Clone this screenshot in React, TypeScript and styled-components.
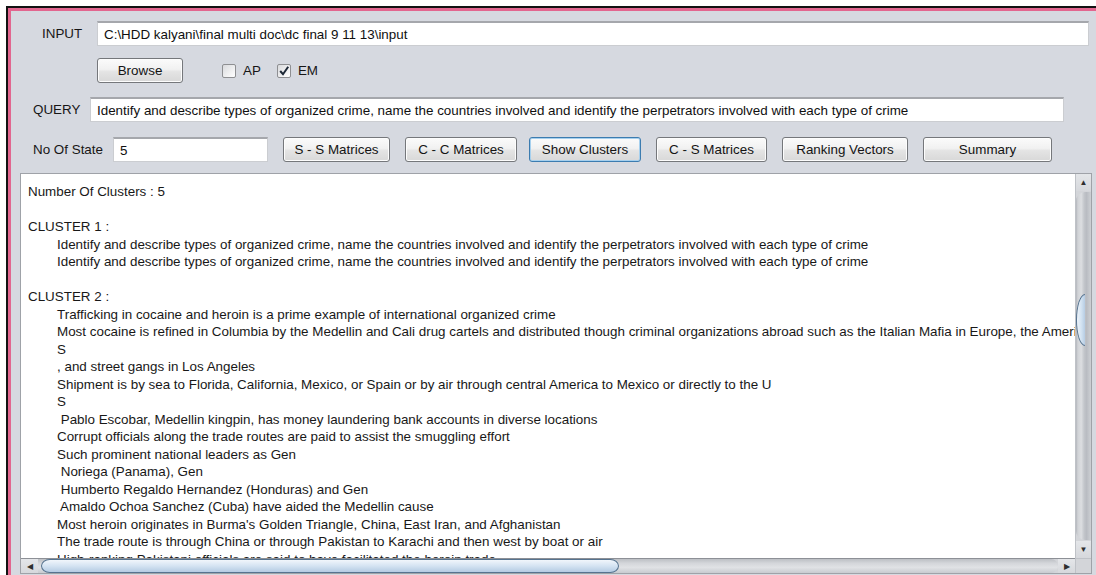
import React from "react";
import styled, { createGlobalStyle } from "styled-components";

const GlobalStyle = createGlobalStyle`
  html, body {
    margin: 0;
    padding: 0;
    background: #ffffff;
    overflow: hidden;
  }
  body {
    font-family: "Liberation Sans", Arial, sans-serif;
    font-size: 13.4px;
    color: #161616;
  }
`;

const Window = styled.div`
  margin: 6px 0 0 6px;
  border-top: 2px solid #121212;
  border-left: 2px solid #121212;
  height: 569px;
  box-sizing: border-box;
`;

const Panel = styled.div`
  border-top: 3px solid #e2668f;
  border-left: 3px solid #e2668f;
  background: #d6d9e0;
  height: 100%;
  box-sizing: border-box;
  padding: 10px 4px 0 0;
  display: flex;
  flex-direction: column;
`;

const Row = styled.div<{ $left: number; $right?: number; $top?: number }>`
  display: flex;
  align-items: center;
  height: 25px;
  padding-left: ${(p) => p.$left}px;
  padding-right: ${(p) => p.$right ?? 0}px;
  margin-top: ${(p) => p.$top ?? 0}px;
`;

const Label = styled.span<{ $width: number }>`
  width: ${(p) => p.$width}px;
  flex: none;
  white-space: nowrap;
`;

const Field = styled.div<{ $width?: number }>`
  height: 100%;
  box-sizing: border-box;
  ${(p) => (p.$width ? `width: ${p.$width}px; flex: none;` : "flex: 1;")}
  background: #ffffff;
  border: 1px solid #cbcdd1;
  border-top: 2px solid #a5a7ac;
  padding: 0 0 0 6px;
  display: flex;
  align-items: center;
  white-space: nowrap;
  overflow: hidden;
  color: #101010;
`;

const Button = styled.button<{ $width: number; $gap?: number; $focused?: boolean }>`
  width: ${(p) => p.$width}px;
  height: 25px;
  margin-left: ${(p) => p.$gap ?? 0}px;
  box-sizing: border-box;
  border: 1px solid ${(p) => (p.$focused ? "#3c7cb0" : "#75777b")};
  box-shadow: ${(p) =>
    p.$focused ? "inset 0 0 0 1px #a6d0ee" : "inset 0 0 0 1px #fdfdfd"};
  border-radius: 3px;
  background: linear-gradient(#fbfbfb 0%, #f1f1f1 45%, #e4e4e4 55%, #d8d8d8 100%);
  font-family: "Liberation Sans", Arial, sans-serif;
  font-size: 13.4px;
  color: #141414;
  padding: 0;
  flex: none;
`;

const Check = styled.span<{ $gap: number }>`
  display: inline-flex;
  align-items: center;
  margin-left: ${(p) => p.$gap}px;
  gap: 7px;
`;

const Box = styled.span`
  width: 14px;
  height: 14px;
  box-sizing: border-box;
  border: 1px solid #8e8f92;
  border-radius: 2px;
  background: linear-gradient(135deg, #d9dadd, #f4f4f5 70%, #ffffff);
  display: inline-flex;
  align-items: center;
  justify-content: center;
`;

const ScrollPane = styled.div`
  margin: 11px 0 0 9px;
  height: 401px;
  flex: none;
  box-sizing: border-box;
  border: 1px solid #9fa2a8;
  background: #ffffff;
  display: grid;
  grid-template-columns: 1fr 16px;
  grid-template-rows: 384px 15px;
`;

const Text = styled.div`
  padding: 9px 0 0 7px;
  overflow: hidden;
  line-height: 17.5px;
  color: #181818;
`;

const Line = styled.div<{ $indent?: boolean }>`
  height: 17.5px;
  white-space: pre;
  padding-left: ${(p) => (p.$indent ? 29 : 0)}px;
`;

const VBar = styled.div`
  display: flex;
  flex-direction: column;
  background: #d3d5d9;
  border-left: 1px solid #bfc2c7;
`;

const ArrowCell = styled.div<{ $h?: number; $w?: number }>`
  flex: none;
  height: ${(p) => (p.$h ? `${p.$h}px` : "auto")};
  width: ${(p) => (p.$w ? `${p.$w}px` : "auto")};
  display: flex;
  align-items: center;
  justify-content: center;
  background: linear-gradient(#e4e6e9, #d6d8dc);
  font-size: 8px;
  color: #2f2f2f;
`;

const VTrack = styled.div`
  flex: 1;
  display: flex;
  flex-direction: column;
  border-radius: 9px 0 0 9px;
  background: linear-gradient(
    to right,
    #b3b6bc 0%,
    #d0d2d6 12%,
    #dcdee1 35%,
    #c2c5ca 55%,
    #b9bcc2 70%,
    #cdd0d4 100%
  );
  margin: 1px 0 1px 0;
`;

const VThumb = styled.div<{ $top: number }>`
  margin-top: ${(p) => p.$top}px;
  height: 52px;
  width: 9px;
  box-sizing: border-box;
  border: 1px solid #56738f;
  border-right: none;
  border-radius: 9px 0 0 9px / 26px 0 0 26px;
  background: linear-gradient(to right, #eef4fa, #cfe0f0 60%, #b6cce3);
`;

const HBar = styled.div`
  display: flex;
  align-items: stretch;
  background: #d3d5d9;
  border-top: 1px solid #8d9096;
`;

const HTrack = styled.div`
  flex: 1;
  display: flex;
  padding-left: 3px;
  background: linear-gradient(#bcbfc4 0%, #d4d6da 30%, #e0e2e5 60%, #c8cbd0 100%);
  border-radius: 0 8px 8px 0;
`;

const HThumb = styled.div<{ $width: number }>`
  width: ${(p) => p.$width}px;
  box-sizing: border-box;
  border: 1px solid #56738f;
  border-radius: 10px / 8px;
  background: linear-gradient(#f1f6fb, #d4e3f2 50%, #b4cbe3);
`;

const Corner = styled.div`
  background: #d3d5d9;
  border-left: 1px solid #bfc2c7;
  border-top: 1px solid #bfc2c7;
`;

const query =
  "Identify and describe types of organized crime, name the countries involved and identify the perpetrators involved with each type of crime";

type TextLine = { text: string; indent?: boolean };

const lines: TextLine[] = [
  { text: "Number Of Clusters : 5" },
  { text: "" },
  { text: "CLUSTER 1 :" },
  { text: query, indent: true },
  { text: query, indent: true },
  { text: "" },
  { text: "CLUSTER 2 :" },
  { text: "Trafficking in cocaine and heroin is a prime example of international organized crime", indent: true },
  {
    text: "Most cocaine is refined in Columbia by the Medellin and Cali drug cartels and distributed though criminal organizations abroad such as the Italian Mafia in Europe, the American Mafia in the U",
    indent: true,
  },
  { text: "S", indent: true },
  { text: ", and street gangs in Los Angeles", indent: true },
  {
    text: "Shipment is by sea to Florida, California, Mexico, or Spain or by air through central America to Mexico or directly to the U",
    indent: true,
  },
  { text: "S", indent: true },
  { text: " Pablo Escobar, Medellin kingpin, has money laundering bank accounts in diverse locations", indent: true },
  { text: "Corrupt officials along the trade routes are paid to assist the smuggling effort", indent: true },
  { text: "Such prominent national leaders as Gen", indent: true },
  { text: " Noriega (Panama), Gen", indent: true },
  { text: " Humberto Regaldo Hernandez (Honduras) and Gen", indent: true },
  { text: " Amaldo Ochoa Sanchez (Cuba) have aided the Medellin cause", indent: true },
  { text: "Most heroin originates in Burma's Golden Triangle, China, East Iran, and Afghanistan", indent: true },
  { text: "The trade route is through China or through Pakistan to Karachi and then west by boat or air", indent: true },
  { text: "High-ranking Pakistani officials are said to have facilitated the heroin trade", indent: true },
];

const CheckMark = () => (
  <svg width="12" height="12" viewBox="0 0 12 12">
    <path d="M2.2 6 L5 9.2 L10.2 1.8" fill="none" stroke="#1c2836" strokeWidth="2" />
  </svg>
);

const App = () => (
  <>
    <GlobalStyle />
    <Window>
      <Panel>
        <Row $left={31} $right={3}>
          <Label $width={55}>INPUT</Label>
          <Field>C:\HDD kalyani\final multi doc\dc final 9 11 13\input</Field>
        </Row>
        <Row $left={86} $top={12}>
          <Button $width={86}>Browse</Button>
          <Check $gap={39}>
            <Box />
            AP
          </Check>
          <Check $gap={16}>
            <Box>
              <CheckMark />
            </Box>
            EM
          </Check>
        </Row>
        <Row $left={22} $right={28} $top={14}>
          <Label $width={57}>QUERY</Label>
          <Field>{query}</Field>
        </Row>
        <Row $left={22} $top={15}>
          <Label $width={80}>No Of State</Label>
          <Field $width={155}>5</Field>
          <Button $width={107} $gap={15}>S - S Matrices</Button>
          <Button $width={112} $gap={15}>C - C Matrices</Button>
          <Button $width={112} $gap={12} $focused>
            Show Clusters
          </Button>
          <Button $width={111} $gap={15}>C - S Matrices</Button>
          <Button $width={126} $gap={15}>Ranking Vectors</Button>
          <Button $width={129} $gap={15}>Summary</Button>
        </Row>
        <ScrollPane>
          <Text>
            {lines.map((l, i) => (
              <Line key={i} $indent={l.indent}>
                {l.text}
              </Line>
            ))}
          </Text>
          <VBar>
            <ArrowCell $h={17}>▲</ArrowCell>
            <VTrack>
              <VThumb $top={102} />
            </VTrack>
            <ArrowCell $h={17}>▼</ArrowCell>
          </VBar>
          <HBar>
            <ArrowCell $w={17}>◀</ArrowCell>
            <HTrack>
              <HThumb $width={578} />
            </HTrack>
            <ArrowCell $w={17}>▶</ArrowCell>
          </HBar>
          <Corner />
        </ScrollPane>
      </Panel>
    </Window>
  </>
);

export default App;
